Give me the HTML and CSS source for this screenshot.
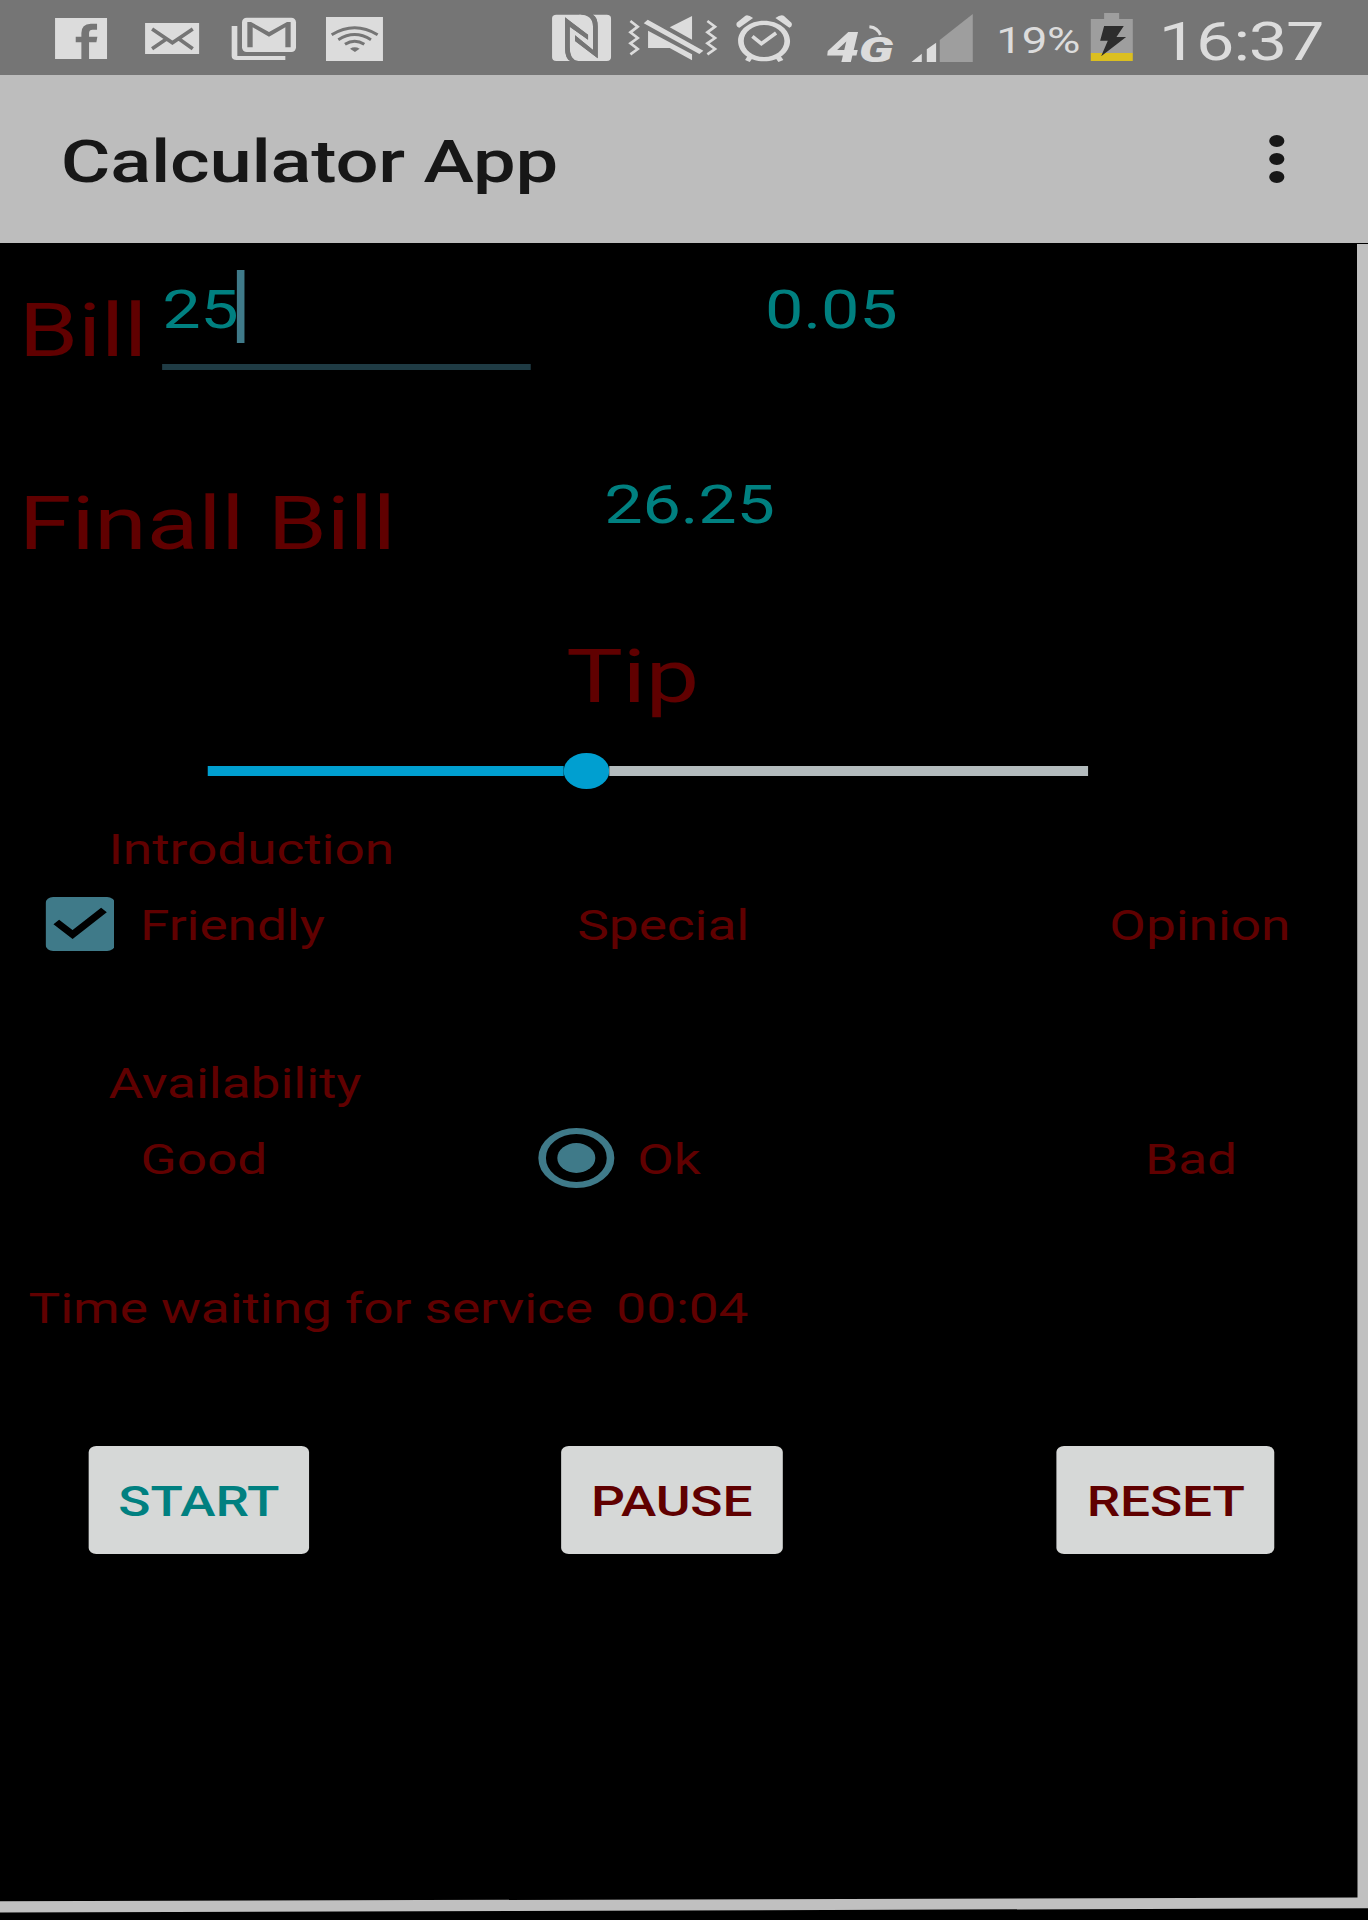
FILE: index.html
```html
<!DOCTYPE html>
<html lang="en">
<head>
<meta charset="utf-8">
<title>Calculator App</title>
<link rel="stylesheet" href="styles.css">
</head>
<body>
<div class="screen">
  <header class="status">
    <svg class="ic fb" viewBox="110 0 268 225" preserveAspectRatio="none"><path class="lt" d="M165 54H321V177H267V127H289L292 110H267V99Q267 89 278 89H291V71H272Q244 72 244 99V110H227V127H244V177H165Z"/></svg>
    <svg class="ic mail" viewBox="376 0 267 225" preserveAspectRatio="none"><path class="lt" d="M435 69H597V162H435Z"/><path class="cut" d="M456 87L517 128L578 87M456 146L499 117M578 146L537 117"/></svg>
    <svg class="ic gmail" viewBox="645 0 288 225" preserveAspectRatio="none"><rect class="lt" x="725" y="53" width="162" height="103" rx="14"/><path class="lt" d="M694 78H711V168H855V180H709Q694 180 694 168Z"/><path class="bg" d="M741 142V66H752L806 96L860 66H871V142H855V82L806 110L757 82V142Z"/></svg>
    <svg class="ic wifi" viewBox="931 0 257 225" preserveAspectRatio="none"><path class="lt" d="M978 51H1149V183H978Z"/><path class="wave" d="M995 104Q1064 62 1133 104M1015 119Q1064 88 1113 119M1035 133Q1064 114 1093 133"/><path class="bg" d="M1050 146Q1064 138 1079 146L1065 156Z"/></svg>
    <svg class="ic nfc" viewBox="40 0 230 225" preserveAspectRatio="none"><path class="lt" d="M79 44H150Q174 44 180 62Q185 76 175 104L105 52V143Q105 177 121 183H79Q66 183 66 172V55Q66 44 79 44Z"/><path class="lt" d="M188 44H230Q243 44 243 55V172Q243 183 230 183H145Q119 180 119 143V80L174 119V104L105 52L150 44Q188 44 189 80V150L135 106V123L203 175V80Q203 50 188 44Z"/><path class="bg" d="M105 52L174 104V119L119 80V140Q119 176 136 183H121Q105 174 105 143Z"/><path class="bg" d="M203 175L135 123V106L189 150V80Q188 52 174 44H188Q203 52 203 80Z"/></svg>
    <svg class="ic vib" viewBox="268 0 320 225" preserveAspectRatio="none"><path class="zig" d="M301 63L323 80L301 97L323 114L301 130L323 147L301 163M532 63L555 80L532 97L555 114L532 130L555 147L532 163"/><path class="lt" d="M353 59L520 152L508 162L341 70ZM486 48V119L419 82ZM354 92L486 163V181L419 144H354Z"/></svg>
    <svg class="ic alarm" viewBox="590 0 250 225" preserveAspectRatio="none"><path class="lt" fill-rule="evenodd" d="M701 62C745 62 779 89 779 123S745 184 701 184S623 157 623 123S657 62 701 62ZM701 75C667 75 640 96 640 123S667 171 701 171S762 150 762 123S735 75 701 75Z"/><path class="lt" d="M619 68L645 47Q653 43 668 54L627 83Q615 80 619 68ZM783 68L760 47Q750 43 735 54L777 83Q788 79 783 68ZM653 166L666 175L658 186L644 180ZM749 166L736 175L744 186L759 180Z"/><path class="tick" d="M666 109L693 131L737 99"/></svg>
    <svg class="ic net" viewBox="840 0 280 225" preserveAspectRatio="none"><text class="g4" x="891" y="186" textLength="99" lengthAdjust="spacingAndGlyphs">4</text><text class="g4 g" x="988" y="185" textLength="104" lengthAdjust="spacingAndGlyphs">G</text><path class="arc" d="M1020 80Q1045 82 1053 105"/></svg>
    <svg class="ic signal" viewBox="1120 0 230 225" preserveAspectRatio="none"><path class="lt" d="M1145 186L1176 161V186ZM1191 148L1219 128V186H1191Z"/><path class="dim" d="M1230 120L1329 42V186H1230Z"/></svg>
    <span class="pct">19%</span>
    <svg class="ic batt" viewBox="440 0 160 225" preserveAspectRatio="none"><path class="dim" d="M492 39H537V57H578V160H452V57H492Z"/><path class="yel" d="M452 159H578V183H452Z"/><path class="bolt" d="M492 78H551L529 111H558L483 169L503 122H480Z"/></svg>
    <span class="clock">16:37</span>
  </header>
  <div class="appbar">
    <h1>Calculator App</h1>
    <div class="more"><i></i><i></i><i></i></div>
  </div>
  <main>
    <section class="bill">
      <span class="big">Bill</span>
      <div class="field"><span class="num">25</span><i class="caret"></i></div>
      <span class="num rate">0.05</span>
    </section>
    <section class="final">
      <span class="big">Finall Bill</span>
      <span class="num total">26.25</span>
    </section>
    <section class="tip"><span class="big">Tip</span></section>
    <div class="slider"><i class="done"></i><i class="thumb"></i><i class="rest"></i></div>
    <section class="group">
      <h2>Introduction</h2>
      <div class="opts intro">
        <svg class="check" viewBox="0 0 55 54" preserveAspectRatio="none"><rect width="55" height="54" rx="6"/><path d="M8.500 25L21.500 37.500L46.500 13"/></svg>
        <span>Friendly</span><span>Special</span><span>Opinion</span>
      </div>
    </section>
    <section class="group">
      <h2>Availability</h2>
      <div class="opts avail">
        <span>Good</span>
        <i class="radio"></i>
        <span>Ok</span><span>Bad</span>
      </div>
    </section>
    <section class="wait"><span>Time waiting for service</span><span>00:04</span></section>
    <section class="buttons">
      <button class="start">START</button><button>PAUSE</button><button>RESET</button>
    </section>
  </main>
  <svg class="edge" viewBox="0 0 1368 1677" preserveAspectRatio="none"><path d="M1357 1H1368V1665.300L0 1669.500V1658.300L1357.500 1654.500Z"/></svg>
</div>
</body>
</html>
```
FILE: styles.css
```css
* { box-sizing: border-box; }
html, body { margin: 0; background: #000; overflow: hidden; }
body { width: 1368px; height: 1920px; }
/* A 1080px wide layout, widened to fill the window */
.screen {
  position: relative;
  width: 1080px;
  height: 1920px;
  transform: scaleX(1.266667);
  transform-origin: 0 0;
  font-family: Roboto, "Liberation Sans", sans-serif;
  color: #600000;
  background: #000;
}
i { display: block; }

.status { display: flex; height: 75px; padding-left: 28.9px; background: #757575; color: #dcdcdc; }
.ic { flex: none; height: 75px; display: block; }
.fb { width: 70.5px; }
.mail { width: 70.3px; }
.gmail { width: 75.8px; }
.wifi { width: 67.6px; }
.nfc { width: 60.5px; margin-left: 115.8px; }
.vib { width: 84.2px; }
.alarm { width: 65.8px; }
.net { width: 73.7px; }
.signal { width: 60.5px; }
.batt { width: 42.1px; }
.lt { fill: #dcdcdc; }
.bg { fill: #757575; }
.dim { fill: #9e9e9e; }
.yel { fill: #dbbf20; }
.bolt { fill: #2d2d2d; }
.cut { fill: none; stroke: #757575; stroke-width: 11; }
.wave { fill: none; stroke: #757575; stroke-width: 9; }
.zig { fill: none; stroke: #dcdcdc; stroke-width: 8; }
.tick { fill: none; stroke: #dcdcdc; stroke-width: 11; }
.arc { fill: none; stroke: #dcdcdc; stroke-width: 9; }
.g4 { font: italic 900 125px Roboto, sans-serif; fill: #dcdcdc; }
.g4.g { font-size: 103px; }
.pct { width: 84.2px; padding: 20px 0 0 13px; font-size: 36px; line-height: 42px; letter-spacing: -0.2px; white-space: nowrap; }
.clock { padding: 10px 0 0 15px; font-size: 54px; line-height: 64px; letter-spacing: -0.9px; }

.appbar { display: flex; justify-content: space-between; align-items: center; height: 168px; padding: 0 66px 0 48px; background: #bdbdbd; color: #171717; }
h1 { margin: 6px 0 0; font-size: 60px; font-weight: 500; line-height: 70px; letter-spacing: -0.2px; }
.more { display: grid; gap: 6px; }
.more i { width: 12px; height: 12px; border-radius: 50%; background: #171717; }

.big { font-size: 75px; line-height: 88px; letter-spacing: -0.1px; white-space: nowrap; }
.num { font-size: 54px; line-height: 64px; color: #008080; letter-spacing: -0.2px; }
.bill { display: grid; grid-template-columns: 113px 291px 1fr; height: 229.6px; padding: 27px 0 0 15px; align-items: start; }
.bill .big { margin-top: 16.4px; }
.field { display: flex; height: 100px; border-bottom: 6px solid #1f3b44; }
.field .num { width: 58.7px; padding-top: 7.6px; }
.caret { width: 6px; height: 73px; background: #3f7a89; }
.rate { padding: 7.6px 0 0 185px; }
.final { display: grid; grid-template-columns: 462px 1fr; height: 159.8px; padding-left: 15px; align-items: start; }
.final .big { margin-top: 6.8px; }
.tip { height: 120.6px; padding-left: 447px; }
.tip .big { display: block; }
.slider { display: flex; align-items: center; height: 36px; padding: 0 221px 0 163.5px; }
.done { width: 281.5px; height: 10px; background: #009fd0; }
.thumb { width: 36px; height: 36px; border-radius: 50%; background: #009fd0; }
.rest { flex: 1; height: 10px; background: #b3bbbd; }

.group { height: 234px; padding-top: 36px; font-size: 42px; line-height: 50px; letter-spacing: -0.05px; }
.group + .group { height: 225px; }
h2 { margin: 0 0 22px; padding-left: 85.6px; font: inherit; }
.opts { display: grid; height: 60px; padding-left: 35.5px; align-items: center; }
.intro { grid-template-columns: 75px 345.3px 420px 1fr; height: 54px; }
.intro span { margin-top: 3.5px; }
.check { width: 54.5px; height: 54px; fill: #3f7a89; }
.check path { fill: none; stroke: #000; stroke-width: 6.5; }
.avail { grid-template-columns: 314px 78px 401px 1fr; padding-left: 111px; margin-top: -3px; }
.avail span { margin-top: 3.5px; }
.radio { display: grid; place-items: center; width: 60px; height: 60px; border: 6px solid #3f7a89; border-radius: 50%; }
.radio::before { content: ""; width: 30px; height: 30px; border-radius: 50%; background: #3f7a89; }
.wait { display: grid; grid-template-columns: 464px 1fr; height: 198px; padding: 35.7px 0 0 22.6px; font-size: 42px; line-height: 50px; letter-spacing: -0.07px; white-space: nowrap; }
.buttons { display: grid; grid-template-columns: 174.7px 174.7px 172px; column-gap: 198.7px; padding-left: 69.6px; }
.buttons button:last-child { margin-left: 18px; margin-right: -18px; }
button { height: 108px; padding: 5px 0 0; border: 0; border-radius: 6px; background: #d6d8d7; color: #600000; font: 500 42px/50px Roboto, sans-serif; letter-spacing: -0.1px; }
.start { color: #008080; }

/* Light rim along the right and bottom of the content */
.edge { position: absolute; left: 0; top: 243px; width: 1080px; height: 1677px; fill: #c0c0c0; pointer-events: none; }
```
